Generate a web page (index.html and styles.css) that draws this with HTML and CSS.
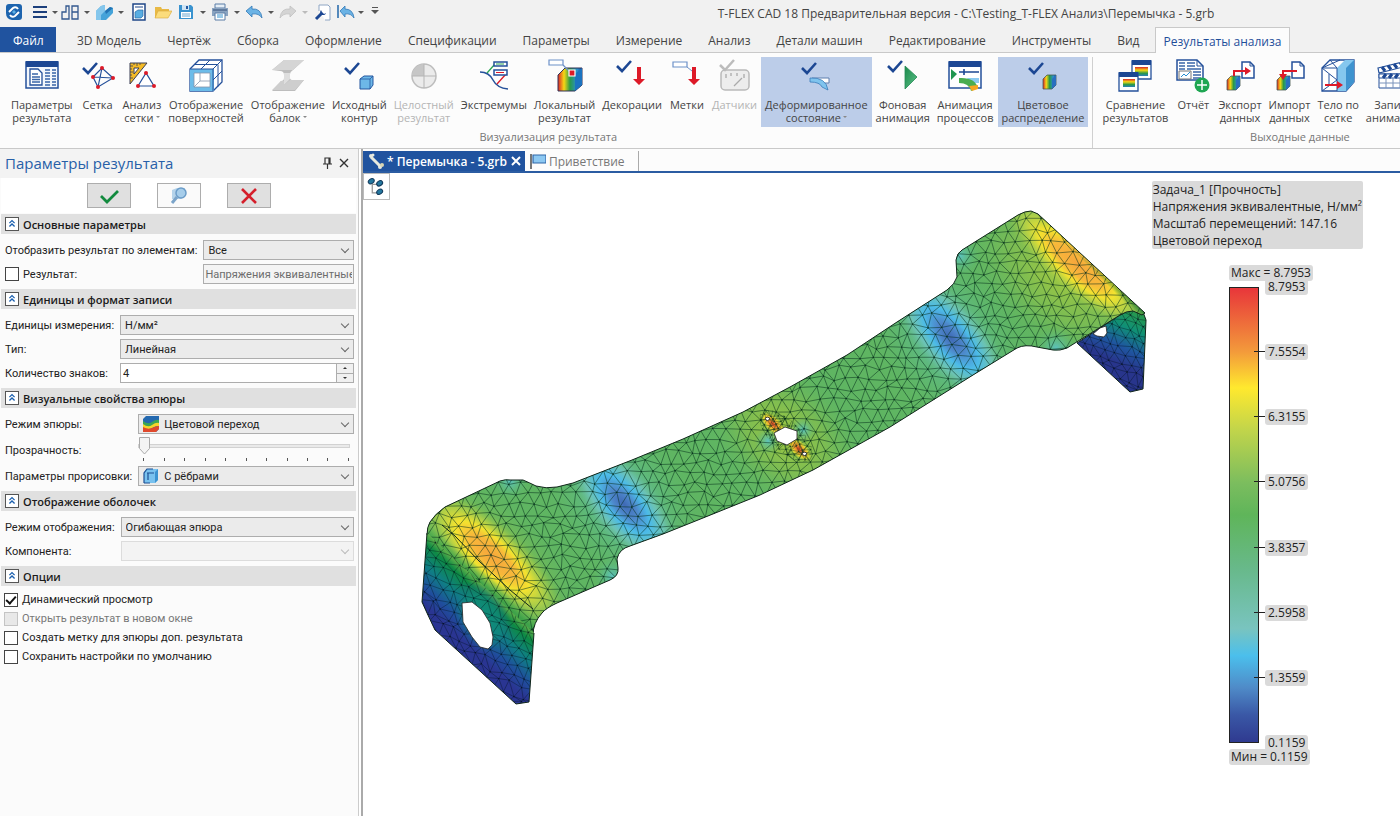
FILE: index.html
```
<!DOCTYPE html>
<html lang="ru">
<head>
    <meta charset="UTF-8">
    <meta name="viewport" content="width=device-width, initial-scale=1.0">
    <title>T-FLEX CAD 18 - Перемычка - 5.grb</title>
    <link rel="stylesheet" href="styles.css">
</head>
<body>
    <svg class="defs" aria-hidden="true">
        <defs>
            <linearGradient id="rainbow" x1="0" x2="1" y1="0" y2="0">
                <stop offset="0" stop-color="#d8232a"/><stop offset=".25" stop-color="#f7d813"/>
                <stop offset=".5" stop-color="#2a9a48"/><stop offset=".8" stop-color="#2a8fd0"/><stop offset="1" stop-color="#1c4fa0"/>
            </linearGradient>
            <linearGradient id="rainbowDown" x1="0" x2="0" y1="0" y2="1">
                <stop offset="0" stop-color="#d8232a"/><stop offset=".35" stop-color="#f7d813"/>
                <stop offset=".7" stop-color="#2a9a48"/><stop offset="1" stop-color="#2a7fc0"/>
            </linearGradient>
            <linearGradient id="play" x1="0" x2="1" y1="0" y2="1">
                <stop offset="0" stop-color="#1b8a4b"/><stop offset="1" stop-color="#5cc088"/>
            </linearGradient>
        </defs>
        <symbol id="tick" viewBox="0 0 16 13"><path d="M1 6l5 5L15 1" fill="none" stroke="#1c4793" stroke-width="2.600"/></symbol>
        <symbol id="cube" viewBox="0 0 15 15"><path d="M1 4l4-3h9v9l-3 4H1z" fill="#6db8e8" stroke="#24579f"/><path d="M1 4h10v10M11 4l3-3" fill="none" stroke="#24579f" stroke-width=".8"/></symbol>
        <symbol id="cubeRainbow" viewBox="0 0 15 16"><path d="M1 5l4-4h9v10l-4 4H1z" fill="url(#rainbow)" stroke="#4a5a50" stroke-width=".8"/><path d="M10 5l4-4v10l-4 4z" fill="#2a6fc0"/></symbol>
        <symbol id="collapse" viewBox="0 0 14 14"><path d="M4 6l3-3 3 3M4 10l3-3 3 3" fill="none" stroke="#1a5fae" stroke-width="1.500"/></symbol>
    </svg>

    <!-- Заголовок окна -->
    <header class="titlebar">
        <div class="quick">
            <button class="q logo" aria-label="T-FLEX"><svg viewBox="0 0 18 18"><path d="M4 1h10q3 0 3 3v10q0 3-3 3H7q-6-1-6-7V4q0-3 3-3z" fill="#1d64ae"/><path d="M4 9l4-4q3-2 5 1M14 9l-4 4q-3 2-5-1" fill="none" stroke="#fff" stroke-width="2"/><path d="M9 7l2 2-2 2-2-2z" fill="#5db1e6"/></svg></button>
            <button class="q menu" aria-label="Меню"><svg viewBox="0 0 18 18"><path d="M2 4h14M2 9h14M2 14h14" stroke="#1c3f7c" stroke-width="2"/></svg></button>
            <button class="drop small" aria-label="Ещё"></button>
            <button class="q" aria-label="Фрагмент"><svg viewBox="0 0 18 18"><path d="M1 16V9h4V3h3v13zM11 3h6v13h-6zM11 9h6" fill="none" stroke="#33588f" stroke-width="1.300"/></svg></button>
            <button class="drop" aria-label="Ещё"></button>
            <button class="q" aria-label="3D фрагмент"><svg viewBox="0 0 18 18"><path d="M1 8l5-5 4-1v6l5-4 3 1v5l-7 7H1z" fill="#45a3d9"/><path d="M1 8l5-5 4-1v6l-4 4v5H1z" fill="#84c6ec"/><path d="M10 8l5-4 3 1-7 6z" fill="#2273b4"/></svg></button>
            <button class="drop" aria-label="Ещё"></button>
            <button class="q wide" aria-label="Новый"><svg viewBox="0 0 18 18"><path d="M3 1h12v16H3z" fill="#fff" stroke="#1f4788" stroke-width="1.500"/><path d="M5 4h8" stroke="#1f4788"/><path d="M5 9l3-2h5v6l-2 2H5z" fill="#58ade2" stroke="#2a6aa8" stroke-width=".7"/></svg></button>
            <button class="q wide" aria-label="Открыть"><svg viewBox="0 0 18 18"><path d="M1 15V4h6l1 2h7v3" fill="#e8b945"/><path d="M1 15l3-7h14l-4 7z" fill="#fbdc7c" stroke="#d9a93a" stroke-width=".6"/></svg></button>
            <button class="q" aria-label="Сохранить"><svg viewBox="0 0 18 18"><path d="M2 2h12l2 2v12H2z" fill="#3a93cf"/><path d="M5 2h7v5H5z" fill="#cfe4f4"/><path d="M9 3h2v3H9z" fill="#24579f"/><path d="M4 9h10v6H4z" fill="#fff"/><path d="M5 11h8M5 13h8" stroke="#6aa6cf"/></svg></button>
            <button class="drop" aria-label="Ещё"></button>
            <button class="q" aria-label="Печать"><svg viewBox="0 0 18 18"><path d="M4 1h10v4H4z" fill="#e5eef6" stroke="#5b7da6"/><path d="M1 5h16v8H1z" fill="#8aa3c0"/><path d="M2 7h14" stroke="#35507b"/><path d="M4 10h10v7H4z" fill="#fff" stroke="#5b7da6"/><path d="M6 12h6M6 14h6" stroke="#3994cf"/></svg></button>
            <button class="drop" aria-label="Ещё"></button>
            <button class="q" aria-label="Отменить"><svg viewBox="0 0 18 18"><path d="M1 8l6-5v3q9-1 10 9-3-5-10-4v3z" fill="#6bb3e5" stroke="#3179b8" stroke-width=".8"/></svg></button>
            <button class="drop" aria-label="Ещё"></button>
            <button class="q" aria-label="Повторить" disabled><svg viewBox="0 0 18 18"><path d="M17 8l-6-5v3Q2 5 1 15q3-5 10-4v3z" fill="#d4d4d4" stroke="#c0c0c0" stroke-width=".8"/></svg></button>
            <button class="drop faded" aria-label="Ещё" disabled></button>
            <button class="q wide" aria-label="Параметры"><svg viewBox="0 0 18 18"><path d="M5 8V2h9l2 2v13h-5" fill="#fff" stroke="#8fa6c4"/><path d="M2 16l6-6" stroke="#1c4793" stroke-width="3"/><path d="M7 7a3 3 0 1 0 5 3l-2 1-2-2z" fill="#1c4793"/></svg></button>
            <button class="q" aria-label="Назад"><svg viewBox="0 0 18 18"><path d="M1 2v13" stroke="#2d6fae" stroke-width="1.600"/><path d="M3 8l5-5v3q8 0 9 9-3-5-9-4v3z" fill="#6bb3e5" stroke="#3179b8" stroke-width=".8"/></svg></button>
            <button class="drop small" aria-label="Ещё"></button>
            <button class="drop line" aria-label="Настройка панели"></button>
        </div>
        <h1>T-FLEX CAD 18 Предварительная версия - C:\Testing_T-FLEX Анализ\Перемычка - 5.grb</h1>
    </header>

    <nav class="tabs" role="tablist">
        <button class="file" role="tab">Файл</button>
        <button role="tab">3D Модель</button>
        <button role="tab">Чертёж</button>
        <button role="tab">Сборка</button>
        <button role="tab">Оформление</button>
        <button role="tab">Спецификации</button>
        <button role="tab">Параметры</button>
        <button role="tab">Измерение</button>
        <button role="tab">Анализ</button>
        <button role="tab">Детали машин</button>
        <button role="tab">Редактирование</button>
        <button role="tab">Инструменты</button>
        <button role="tab">Вид</button>
        <button class="active" role="tab" aria-selected="true">Результаты анализа</button>
    </nav>

    <!-- Лента -->
    <section class="ribbon">
        <div class="group">
            <div class="tools">
                <button class="tool"><svg viewBox="0 0 36 34"><path d="M2 3h32v26H2z" fill="#f3f7fc" stroke="#24509a" stroke-width="1.500"/><path d="M2 2h32v6H2z" fill="#1c4793"/><path d="M6 10h8l4 4v12H6z" fill="#fff" stroke="#24509a" stroke-width="1.300"/><path d="M8 15h6M8 18h8M8 20.500h8M8 23h8M21 11h5M28 11h4M21 14h5M28 14h4M21 17h5M28 17h4M21 20h5M28 20h4M21 23h5M28 23h4M21 26h5M28 26h4" stroke="#3a66a8" stroke-width="1.300"/></svg><span>Параметры<br>результата</span></button>
                <button class="tool"><svg viewBox="0 0 36 34"><use href="#tick" x="2" y="3" width="16" height="13"/><path d="M13 18L22 9l11 10-15 9zM22 9l-4 19M13 18l20 1" fill="none" stroke="#24509a" stroke-width="1.200"/><g fill="#dd1a28"><circle cx="22" cy="9" r="2"/><circle cx="13" cy="18" r="2"/><circle cx="33" cy="19" r="2"/><circle cx="18" cy="28" r="2"/></g></svg><span>Сетка</span></button>
                <button class="tool"><svg viewBox="0 0 36 34"><path d="M6 4h17L6 25z" fill="#f4ba25" stroke="#3b3f55"/><path d="M10 9h5l-5 6z" fill="#fff" stroke="#3b3f55"/><path d="M6 7h3M6 10h2M6 13h3M6 16h2M6 19h3M10 4v2M13 4v3M16 4v2" stroke="#3b3f55" stroke-width=".8"/><path d="M14 27L22 14l8 13z" fill="#fff" stroke="#24509a" stroke-width="1.200"/><g fill="#dd1a28"><circle cx="22" cy="14" r="2"/><circle cx="14" cy="27" r="2"/><circle cx="30" cy="27" r="2"/></g></svg><span>Анализ<br>сетки<i class="caret"></i></span></button>
                <button class="tool"><svg viewBox="0 0 36 34"><path d="M2 10l9-9h23v22l-9 9H2z" fill="#fff" stroke="#24509a" stroke-width="1.300"/><path d="M4 12h20v18H4z" fill="#fff" stroke="#6cbce9" stroke-width="4"/><path d="M2 10h23v22M25 10l9-9M13 10l9-9M7 5.500h23v22M25 21l9-9" fill="none" stroke="#24509a"/><path d="M6 14h16v14H6zM12 14v8h10M6 28l6-6" fill="none" stroke="#8794ab" stroke-width=".8"/></svg><span>Отображение<br>поверхностей</span></button>
                <button class="tool"><svg viewBox="0 0 36 34"><path d="M2 11L14 1h20L23 11q-3 2-3 4v4q0 2 3 2h11l-9 11H2l9-10q3 0 3-3v-3q0-4-4-4z" fill="#bdbdbd"/><path d="M2 11L14 1h20L23 11z" fill="#d5d5d5"/><path d="M14 14h6v6l-6 6z" fill="#dedede"/><path d="M2 31l9-9h3v4l6-5h14l-9 10z" fill="#cecece"/></svg><span>Отображение<br>балок<i class="caret"></i></span></button>
                <button class="tool"><svg viewBox="0 0 36 34"><use href="#tick" x="3" y="3" width="16" height="13"/><use href="#cube" x="18" y="16" width="15" height="15"/></svg><span>Исходный<br>контур</span></button>
                <button class="tool" disabled><svg viewBox="0 0 36 34"><circle cx="18" cy="17" r="12" fill="#ebebeb" stroke="#bdbdbd" stroke-width="1.500"/><path d="M18 17V5A12 12 0 0 0 6 17z" fill="#c6c6c6"/><path d="M18 5v24M6 17h24" stroke="#b5b5b5"/></svg><span>Целостный<br>результат</span></button>
                <button class="tool"><svg viewBox="0 0 36 34"><path d="M4 13q9 0 13 8t15 9" fill="none" stroke="#24509a" stroke-width="1.500"/><path d="M11 14l8-9" fill="none" stroke="#2aa455" stroke-width="1.300"/><path d="M21 25l9-10" stroke="#dd1a28" stroke-width="1.300"/><path d="M18 3h13v4H18zM18 11h13v5H18z" fill="#fff" stroke="#24509a" stroke-width="1.500"/><path d="M20 5h8" stroke="#2aa455"/><path d="M20 13.500h8" stroke="#dd1a28"/></svg><span>Экстремумы</span></button>
                <button class="tool"><svg viewBox="0 0 36 34"><path d="M11 16l7-7h17v17l-7 6H11z" fill="url(#rainbow)" stroke="#335"/><path d="M28 15l7-6v17l-7 6z" fill="#1b73c0"/><path d="M2 1h14v5H2z" fill="#fff" stroke="#6d91c8" stroke-width="1.200"/><path d="M16 6l7 7" stroke="#6d91c8" stroke-width="1.300"/><path d="M22 11h6v6h-6z" fill="#dd1a28" stroke="#fff" stroke-width="1.200"/></svg><span>Локальный<br>результат</span></button>
                <button class="tool"><svg viewBox="0 0 36 34"><use href="#tick" x="2" y="1" width="16" height="13"/><path d="M23 8h4v12h4l-6 6-6-6h4z" fill="#dd1a28"/></svg><span>Декорации</span></button>
                <button class="tool"><svg viewBox="0 0 36 34"><path d="M4 3h14v5H4z" fill="#fff" stroke="#6d91c8" stroke-width="1.200"/><path d="M18 8l5 4" stroke="#6d91c8"/><path d="M23 8h4v12h4l-6 6-6-6h4z" fill="#dd1a28"/></svg><span>Метки</span></button>
                <button class="tool" disabled><svg viewBox="0 0 36 34"><rect x="4" y="11" width="28" height="20" rx="4" fill="#ededed" stroke="#b9b9b9" stroke-width="1.500"/><path d="M9 15v4M14 14v3M20 14v3M27 15v4M17 27l8-8" stroke="#aaa" stroke-width="1.300"/><path d="M3 6l5 5L17 1" fill="none" stroke="#bcbcbc" stroke-width="2.500"/></svg><span>Датчики</span></button>
                <button class="tool on"><svg viewBox="0 0 36 34"><use href="#tick" x="3" y="3" width="16" height="13"/><path d="M14 19h17v5H20z" fill="#fff" stroke="#5f7fae"/><path d="M12 19q16-1 18 12l-6-3q-2-5-12-5z" fill="#80c4ee" stroke="#3a7cba" stroke-width=".8"/></svg><span>Деформированное<br>состояние<i class="caret"></i></span></button>
                <button class="tool"><svg viewBox="0 0 36 34"><use href="#tick" x="2" y="1" width="16" height="13"/><path d="M20 7l12 11-12 12z" fill="url(#play)" stroke="#258a55" stroke-width=".8"/></svg><span>Фоновая<br>анимация</span></button>
                <button class="tool"><svg viewBox="0 0 36 34"><path d="M2 3h32v26H2z" fill="#fff" stroke="#24509a" stroke-width="1.500"/><path d="M2 2h32v6H2z" fill="#1c4793"/><path d="M4 10l6 5-6 6z" fill="#209650"/><path d="M12 13h20M17 10v6" stroke="#1c4793" stroke-width="1.600"/><path d="M20 19h12v5h-8z" fill="#8ccaf0"/><path d="M12 19q16-1 19 10l-7 3q-2-8-12-8z" fill="#4aad50"/><path d="M22 27l9-1v4l-6 2z" fill="#f5a623"/></svg><span>Анимация<br>процессов</span></button>
                <button class="tool on"><svg viewBox="0 0 36 34"><use href="#tick" x="3" y="3" width="16" height="13"/><use href="#cubeRainbow" x="17" y="15" width="15" height="16"/></svg><span>Цветовое<br>распределение</span></button>
            </div>
            <div class="caption">Визуализация результата</div>
        </div>
        <div class="group output">
            <div class="tools">
                <button class="tool"><svg viewBox="0 0 36 34"><path d="M15 2h19v18H15z" fill="#fff" stroke="#24509a" stroke-width="1.300"/><path d="M15 1h19v5H15z" fill="#1c4793"/><path d="M18 8h13v9H18z" fill="url(#rainbowDown)"/><path d="M2 14h19v18H2z" fill="#fff" stroke="#24509a" stroke-width="1.300"/><path d="M2 13h19v5H2z" fill="#1c4793"/><path d="M6 20h12v8H6z" fill="url(#rainbowDown)"/></svg><span>Сравнение<br>результатов</span></button>
                <button class="tool"><svg viewBox="0 0 36 34"><path d="M2 1h20l6 6v14H2z" fill="#fff" stroke="#24509a" stroke-width="1.500"/><path d="M22 1v6h6" fill="none" stroke="#24509a"/><path d="M4 4h6M12 4h8M4 7h6M12 7h8M4 10h6M12 10h14M18 13h8M18 16h8M18 19h8" stroke="#3a66a8" stroke-width="1.500"/><path d="M4 12h12v8H4z" fill="#fff" stroke="#777"/><path d="M6 18l3-3 2 2 4-4" fill="none" stroke="#2a8fd0"/><circle cx="27" cy="26" r="7.500" fill="#1fa652"/><path d="M27 21v10M22 26h10" stroke="#fff" stroke-width="1.500"/></svg><span>Отчёт</span></button>
                <button class="tool"><svg viewBox="0 0 36 34"><path d="M20 3h8l4 4v12H20z" fill="#fff" stroke="#24509a" stroke-width="1.500"/><path d="M28 3v4h4" fill="none" stroke="#24509a"/><use href="#cubeRainbow" x="4" y="16" width="15" height="16"/><path d="M12 17v-5h13" fill="none" stroke="#dd1a28" stroke-width="2"/><path d="M23 8l6 4-6 4z" fill="#dd1a28"/></svg><span>Экспорт<br>данных</span></button>
                <button class="tool"><svg viewBox="0 0 36 34"><path d="M20 3h8l4 4v12H20z" fill="#fff" stroke="#24509a" stroke-width="1.500"/><path d="M28 3v4h4" fill="none" stroke="#24509a"/><use href="#cubeRainbow" x="4" y="16" width="15" height="16"/><path d="M25 12H11v5" fill="none" stroke="#dd1a28" stroke-width="2"/><path d="M7 15h8l-4 6z" fill="#dd1a28"/></svg><span>Импорт<br>данных</span></button>
                <button class="tool"><svg viewBox="0 0 36 34"><path d="M2 9l8-8h24v22l-8 9H2z" fill="#fff" stroke="#24509a" stroke-width="1.300"/><path d="M17 9l8-8h9v22l-8 9h-9z" fill="#85c7ee"/><path d="M26 9l8-8v22l-8 9z" fill="#3e93cf"/><path d="M2 9h15v23M2 9l15 12L2 32M10 1l7 8M2 9l18-8M9 15v11" fill="none" stroke="#24509a"/><path d="M5 26h13" stroke="#dd1a28" stroke-width="2"/><path d="M17 22l6 4-6 4z" fill="#dd1a28"/></svg><span>Тело по<br>сетке</span></button>
                <button class="tool"><svg viewBox="0 0 36 34"><path d="M3 9L32 2v5L4 14z" fill="#fff" stroke="#24509a" stroke-width="1.200"/><path d="M7 8l3 4M13 6.500l3 4M19 5l3 4M25 3.500l3 4" stroke="#1c4793" stroke-width="3"/><path d="M4 15h29v14H4z" fill="#fff" stroke="#24509a"/><path d="M4 15h29v4H4z" fill="#fff" stroke="#24509a"/><path d="M8 19l3-4M14 19l3-4M20 19l3-4M26 19l3-4" stroke="#1c4793" stroke-width="3"/><path d="M4 24h29M11 19v10M18 19v10M25 19v10" stroke="#7a93bb"/></svg><span>Запись<br>анимации</span></button>
            </div>
            <div class="caption">Выходные данные</div>
        </div>
    </section>

    <main class="workspace">
        <!-- Панель параметров -->
        <aside class="panel">
            <div class="panel-title">
                <h2>Параметры результата</h2>
                <button aria-label="Закрепить"><svg viewBox="0 0 12 12"><path d="M4 1h5v6H4zM2 7h9M6.500 7v5M8 1v6" fill="none" stroke="#333" stroke-width="1.200"/></svg></button>
                <button aria-label="Закрыть"><svg viewBox="0 0 12 12"><path d="M2 2l8 8M10 2l-8 8" stroke="#333" stroke-width="1.400"/></svg></button>
            </div>
            <div class="actions">
                <button aria-label="Принять"><svg viewBox="0 0 22 18"><path d="M3 9l6 6L20 4" fill="none" stroke="#128a3e" stroke-width="2.800"/></svg></button>
                <button class="preview" aria-label="Просмотр"><svg viewBox="0 0 22 18"><path d="M4 3l5-2h8v8l-4 3H4z" fill="#b5d3ea"/><circle cx="13" cy="6" r="5" fill="#a6cdea" stroke="#6b9cc8" stroke-width="1.500"/><path d="M9 10l-5 6" stroke="#7ba4c9" stroke-width="3"/></svg></button>
                <button aria-label="Отменить"><svg viewBox="0 0 22 18"><path d="M4 2l14 14M18 2L4 16" stroke="#d51f2b" stroke-width="2.600"/></svg></button>
            </div>

            <button class="section"><svg viewBox="0 0 14 14"><use href="#collapse"/></svg>Основные параметры</button>
            <div class="fields">
                <label for="elements">Отобразить результат по элементам:</label>
                <div class="combo"><select id="elements"><option>Все</option></select></div>
                <label class="check"><input type="checkbox">Результат:</label>
                <input class="text" type="text" value="Напряжения эквивалентные" aria-label="Результат" disabled>
            </div>

            <button class="section"><svg viewBox="0 0 14 14"><use href="#collapse"/></svg>Единицы и формат записи</button>
            <div class="fields">
                <label for="units">Единицы измерения:</label>
                <div class="combo"><select id="units"><option>Н/мм²</option></select></div>
                <label for="type">Тип:</label>
                <div class="combo"><select id="type"><option>Линейная</option></select></div>
                <label for="digits">Количество знаков:</label>
                <div class="spinner">
                    <input class="text" id="digits" type="text" value="4">
                    <div class="steps"><button class="up" aria-label="Больше"></button><button class="down" aria-label="Меньше"></button></div>
                </div>
            </div>

            <button class="section"><svg viewBox="0 0 14 14"><use href="#collapse"/></svg>Визуальные свойства эпюры</button>
            <div class="fields">
                <label for="mode">Режим эпюры:</label>
                <div class="combo pic"><select id="mode"><option>Цветовой переход</option></select><svg viewBox="0 0 16 16"><path d="M0 3l3-3h13v13l-3 3H0z" fill="#2469b0"/><path d="M0 5q5 4 9 1t7-2v4q-4-1-7 2t-9 0z" fill="#3aa655"/><path d="M0 8q5 4 9 1t7-2v3q-4 0-7 2t-9 0z" fill="#f6d52a"/><path d="M0 11q5 3 9 1t7-2v3l-3 3H0z" fill="#e0492c"/></svg></div>
                <label for="opacity">Прозрачность:</label>
                <div class="slider">
                    <input id="opacity" type="range" min="0" max="10" value="0">
                    <div class="ticks"><i></i><i></i><i></i><i></i><i></i><i></i><i></i><i></i><i></i><i></i><i></i></div>
                </div>
                <label for="edges">Параметры прорисовки:</label>
                <div class="combo pic"><select id="edges"><option>С рёбрами</option></select><svg viewBox="0 0 16 16"><path d="M1 4l3-3h11v11l-3 3H1z" fill="#79c2ef"/><path d="M12 4l3-3v11l-3 3z" fill="#3c94d2"/><path d="M1 15V5l3-4h6M1 15h6M5 5v7M4 5h7" fill="none" stroke="#1d4f93" stroke-width="1.200"/></svg></div>
            </div>

            <button class="section"><svg viewBox="0 0 14 14"><use href="#collapse"/></svg>Отображение оболочек</button>
            <div class="fields">
                <label for="shell">Режим отображения:</label>
                <div class="combo"><select id="shell"><option>Огибающая эпюра</option></select></div>
                <label for="component">Компонента:</label>
                <div class="combo"><select id="component" disabled><option></option></select></div>
            </div>

            <button class="section"><svg viewBox="0 0 14 14"><use href="#collapse"/></svg>Опции</button>
            <div class="options">
                <label class="check"><input type="checkbox" checked>Динамический просмотр</label>
                <label class="check off"><input type="checkbox" disabled>Открыть результат в новом окне</label>
                <label class="check"><input type="checkbox">Создать метку для эпюры доп. результата</label>
                <label class="check"><input type="checkbox">Сохранить настройки по умолчанию</label>
            </div>
        </aside>

        <section class="document">
            <div class="doc-tabs">
                <div class="doc-tab current">
                    <svg viewBox="0 0 16 16"><path d="M3 4l9 9" stroke="#e8eadf" stroke-width="3"/><circle cx="3" cy="3" r="2" fill="#e8eadf"/><circle cx="5" cy="2" r="1.500" fill="#e8eadf"/><circle cx="12" cy="14" r="2" fill="#e8eadf"/><circle cx="14" cy="12" r="2" fill="#d8d6b4"/></svg>
                    <a href="#">* Перемычка - 5.grb</a>
                    <button aria-label="Закрыть вкладку"><svg viewBox="0 0 12 12"><path d="M2 2l8 8M10 2l-8 8" stroke="#fff" stroke-width="2"/></svg></button>
                </div>
                <div class="doc-tab">
                    <svg viewBox="0 0 16 16"><path d="M1 1v15" stroke="#777" stroke-width="2"/><path d="M3 2h13v8H3z" fill="#8cc8f2" stroke="#2f66a8" stroke-width="1.200"/></svg>
                    <a href="#">Приветствие</a>
                </div>
            </div>
            <div class="viewport">
                <svg class="model" viewBox="363 173 1037 643" preserveAspectRatio="xMinYMin meet" role="img" aria-label="Эпюра напряжений">
                    <defs>
                        <clipPath id="plateClip"><path id="plate" d="M427 535Q427 527 430 522Q435 514 445 507L500 481Q506 479 510 480L523 480Q530 483 536 486Q546 489 557 487L573 483L632 460L683 439L743 412L790 387L847 355L897 322L947 290Q955 284 957 277L956 260Q957 253 962 250L1018 215Q1025 211 1031 211L1038 214L1145 313L1142 315L1133 311Q1126 311 1120 315L1067 348Q1060 351 1053 350L1037 347Q1025 344 1017 348L973 375L890 427L813 470L760 495L698 520L663 534L630 546Q619 549 617 559L618 568Q619 576 610 580L557 603Q546 608 542 613Q533 623 533 635Z"/></clipPath>
                        <clipPath id="leftClip"><path id="left" d="M427 533L534 633L529 702L516 704L435 630L427 613L422 602Z"/></clipPath>
                        <clipPath id="rightClip"><path id="right" d="M1077 343L1120 315Q1126 311 1133 310L1143 312L1146 320L1143 389L1130 392Z"/></clipPath>
                        <clipPath id="fineClip"><ellipse cx="786" cy="436" rx="34" ry="15" transform="rotate(44 786 436)"/></clipPath>
                        <radialGradient id="hot"><stop offset="0" stop-color="#f6a63c"/><stop offset=".3" stop-color="#f8b83a"/><stop offset=".5" stop-color="#f3e32f"/><stop offset=".72" stop-color="#b8d346" stop-opacity=".75"/><stop offset="1" stop-color="#7dbf50" stop-opacity="0"/></radialGradient>
                        <radialGradient id="cold"><stop offset="0" stop-color="#3f69b5"/><stop offset=".22" stop-color="#4d86ca"/><stop offset=".45" stop-color="#4cbbe8"/><stop offset=".7" stop-color="#70c5bd" stop-opacity=".8"/><stop offset="1" stop-color="#66b884" stop-opacity="0"/></radialGradient>
                        <radialGradient id="lime"><stop offset="0" stop-color="#a3c93f"/><stop offset=".5" stop-color="#86bf4d" stop-opacity=".7"/><stop offset="1" stop-color="#5fb562" stop-opacity="0"/></radialGradient>
                        <radialGradient id="aqua"><stop offset="0" stop-color="#5cc2bd"/><stop offset="1" stop-color="#5fb562" stop-opacity="0"/></radialGradient>
                        <radialGradient id="peak"><stop offset="0" stop-color="#e0402a"/><stop offset=".4" stop-color="#f3a72f"/><stop offset=".7" stop-color="#f2e12f" stop-opacity=".8"/><stop offset="1" stop-color="#86bf4d" stop-opacity="0"/></radialGradient>
                        <radialGradient id="teal"><stop offset="0" stop-color="#0f8f78"/><stop offset=".6" stop-color="#10887c" stop-opacity=".7"/><stop offset="1" stop-color="#1c5f94" stop-opacity="0"/></radialGradient>
                        <linearGradient id="leftFill" gradientUnits="userSpaceOnUse" x1="483" y1="585" x2="446" y2="625"><stop offset="0" stop-color="#5fb04a"/><stop offset=".15" stop-color="#0e8a44"/><stop offset=".45" stop-color="#0f7f84"/><stop offset=".75" stop-color="#1f4f9d"/><stop offset="1" stop-color="#2a3592"/></linearGradient>
                        <linearGradient id="rightFill" gradientUnits="userSpaceOnUse" x1="1140" y1="312" x2="1116" y2="362"><stop offset="0" stop-color="#2a9a48"/><stop offset=".35" stop-color="#109076"/><stop offset=".7" stop-color="#1f56a0"/><stop offset="1" stop-color="#28358c"/></linearGradient>
                        <linearGradient id="bend" gradientUnits="userSpaceOnUse" x1="1084" y1="262" x2="1091" y2="255"><stop offset="0" stop-color="#1d7a2c" stop-opacity="0"/><stop offset="1" stop-color="#14682c"/></linearGradient>
                        <linearGradient id="bendLeft" gradientUnits="userSpaceOnUse" x1="487" y1="574" x2="480" y2="582"><stop offset="0" stop-color="#4fae4a" stop-opacity="0"/><stop offset="1" stop-color="#3fa24a"/></linearGradient>
                    </defs>
                    <use href="#right" fill="url(#rightFill)"/>
                    <path id="rightMesh" class="mesh dark" clip-path="url(#rightClip)"/>
                    <use href="#right" class="outline"/>
                    <path d="M1093 334L1100 328L1106 326L1107 333L1104 337L1097 336Z" class="hole"/>
                    <g clip-path="url(#plateClip)">
                        <path d="M363 173h1037v643H363z" fill="#5fb562"/>
                        <ellipse cx="785" cy="436" rx="100" ry="64" transform="rotate(44 785 436)" fill="url(#lime)"/>
                        <ellipse cx="1060" cy="275" rx="118" ry="72" transform="rotate(42 1060 275)" fill="url(#lime)"/>
                        <ellipse cx="488" cy="560" rx="120" ry="60" transform="rotate(43 488 560)" fill="url(#lime)"/>
                        <ellipse cx="622" cy="502" rx="110" ry="72" transform="rotate(55 622 502)" fill="url(#aqua)"/>
                        <ellipse cx="948" cy="338" rx="110" ry="72" transform="rotate(55 948 338)" fill="url(#aqua)"/>
                        <ellipse cx="624" cy="504" rx="80" ry="34" transform="rotate(50 624 504)" fill="url(#cold)"/>
                        <ellipse cx="951" cy="338" rx="84" ry="35" transform="rotate(50 951 338)" fill="url(#cold)"/>
                        <ellipse cx="492" cy="556" rx="96" ry="32" transform="rotate(43 492 556)" fill="url(#hot)"/>
                        <ellipse cx="1077" cy="264" rx="98" ry="30" transform="rotate(42 1077 264)" fill="url(#hot)"/>
                        <circle cx="510" cy="481" r="20" fill="url(#aqua)"/>
                        <circle cx="612" cy="576" r="20" fill="url(#aqua)"/>
                        <circle cx="960" cy="256" r="22" fill="url(#aqua)"/>
                        <circle cx="1056" cy="348" r="22" fill="url(#aqua)"/>
                        <circle cx="803" cy="430" r="14" fill="url(#aqua)"/>
                        <circle cx="768" cy="441" r="14" fill="url(#aqua)"/>
                        <ellipse cx="773" cy="424" rx="17" ry="8" transform="rotate(44 773 424)" fill="url(#peak)"/>
                        <ellipse cx="799" cy="449" rx="17" ry="8" transform="rotate(44 799 449)" fill="url(#peak)"/>
                        <path d="M1031 211L1145 313L1138 319L1024 217Z" fill="url(#bend)"/>
                        <path d="M427 533L534 635L545 624L437 522Z" fill="url(#bendLeft)"/>
                        <path id="plateMesh" class="mesh"/>
                        <path id="fineMesh" class="mesh fine" clip-path="url(#fineClip)"/>
                        <path d="M442 525L455 536L479 561L510 590L533 609" class="crease"/>
                    </g>
                    <use href="#plate" class="outline"/>
                    <use href="#left" fill="url(#leftFill)"/>
                    <g clip-path="url(#leftClip)">
                        <ellipse cx="482" cy="618" rx="40" ry="26" transform="rotate(58 482 618)" fill="url(#teal)"/>
                        <path id="leftMesh" class="mesh dark"/>
                    </g>
                    <path d="M534 633L529 702L516 704L435 630L427 613L422 602L427 533" class="outline"/>
                    <path d="M462 603L472 602L482 610L490 623L493 637L492 645L488 649L480 647L472 637L463 622Z" class="hole"/>
                    <path d="M774 433L785 427L797 431L797 439L787 445L777 441Z" class="hole"/>
                    <path d="M765 418l3-1 2 2-3 2zM802 453l3-1 2 2-3 2z" class="hole"/>
                </svg>

                <button class="tree" aria-label="Дерево модели"><svg viewBox="0 0 18 18"><path d="M5 6v9h5M5 7h5" fill="none" stroke="#999" stroke-width="1.200"/><g fill="#24789f" stroke="#123a5c"><ellipse cx="4" cy="4" rx="3" ry="2.200" transform="rotate(-35 4 4)"/><ellipse cx="12" cy="6" rx="3" ry="2.200" transform="rotate(-35 12 6)"/><ellipse cx="12" cy="14" rx="3" ry="2.200" transform="rotate(-35 12 14)"/></g></svg></button>

                <div class="info">Задача_1 [Прочность]<br>Напряжения эквивалентные, Н/мм²<br>Масштаб перемещений: 147.16<br>Цветовой переход</div>

                <div class="legend">
                    <div class="chip">Макс = 8.7953</div>
                    <div class="scale">
                        <div class="bar"></div>
                        <ol>
                            <li>8.7953</li>
                            <li>7.5554</li>
                            <li>6.3155</li>
                            <li>5.0756</li>
                            <li>3.8357</li>
                            <li>2.5958</li>
                            <li>1.3559</li>
                            <li>0.1159</li>
                        </ol>
                    </div>
                    <div class="chip">Мин = 0.1159</div>
                </div>
            </div>
        </section>
    </main>

    <script src="mesh.js"></script>
</body>
</html>
```
FILE: styles.css
```
* {
    box-sizing: border-box;
}
body {
    margin: 0;
    height: 100vh;
    display: flex;
    flex-direction: column;
    overflow: hidden;
    background: #fff;
    color: #444;
    font-family: "Open Sans", "Noto Sans", sans-serif;
    font-size: 11px;
}
button, input, select {
    font: inherit;
    color: inherit;
    margin: 0;
}
button {
    padding: 0;
    border: 0;
    background: none;
}
svg {
    display: block;
}
h1, h2 {
    margin: 0;
    font-weight: normal;
}
.defs {
    position: absolute;
    width: 0;
    height: 0;
}

/* заголовок */
.titlebar {
    display: flex;
    height: 27px;
    background: #f1f1f1;
}
.titlebar h1 {
    flex: 1;
    padding-left: 52px;
    font-size: 12px;
    line-height: 28px;
    text-align: center;
    white-space: nowrap;
}
.quick {
    display: flex;
    align-items: center;
    flex: 0 0 480px;
    height: 24px;
    padding: 0 3px;
}
.q {
    flex: 0 0 22px;
    display: flex;
    justify-content: center;
}
.q svg {
    width: 18px;
    height: 18px;
}
.q.menu {
    margin-left: 4px;
}
.q.wide {
    flex-basis: 24px;
}
.drop {
    flex: 0 0 12px;
    display: flex;
    justify-content: center;
}
.drop::before {
    content: "";
    border: 3px solid transparent;
    border-top-color: #555;
    border-bottom: 0;
}
.drop.small {
    flex-basis: 8px;
}
.drop.faded::before {
    border-top-color: #bbb;
}
.drop.line {
    flex-basis: 20px;
}
.drop.line::before {
    border-width: 4px 4px 0;
    box-shadow: 0 -3px 0 -1px #f1f1f1, 0 -4px 0 -1px #555;
}

/* вкладки ленты */
.tabs {
    display: flex;
    height: 26px;
    background: #f1f1f1;
    border-bottom: 1px solid #c9c9c9;
}
.tabs button {
    padding: 2px 13px 0;
    font-size: 12px;
    white-space: nowrap;
}
.tabs .file {
    width: 56px;
    margin-right: 8px;
    background: #20539f;
    color: #fff;
}
.tabs .active {
    margin: 0 0 -1px 2px;
    padding: 1px 8px 0;
    border: 1px solid #c9c9c9;
    border-bottom: 0;
    background: #fcfcfc;
    color: #1f4e9a;
}

/* лента */
.ribbon {
    display: flex;
    height: 96px;
    padding: 4px 0 0 8px;
    background: #fcfcfc;
    border-bottom: 1px solid #c9c9c9;
    overflow: hidden;
}
.group {
    flex: none;
}
.tools {
    display: flex;
    gap: 1px;
    height: 70px;
}
.tool {
    display: flex;
    flex-direction: column;
    align-items: center;
    gap: 5px;
    padding: 2px 3px 0;
    line-height: 13px;
    white-space: nowrap;
}
.tool svg {
    width: 36px;
    height: 34px;
}
.tool:disabled {
    color: #b4b4b4;
}
.tool.on {
    padding: 2px 4px 0;
    background: #bccde9;
}
.caret {
    display: inline-block;
    margin: 0 0 4px 2px;
    border: 2px solid transparent;
    border-top-color: #888;
    border-bottom: 0;
}
.caption {
    line-height: 20px;
    text-align: center;
    color: #777;
}
.output {
    width: 408px;
    margin-left: 4px;
    padding-left: 6px;
    border-left: 1px solid #d0d0d0;
}

.workspace {
    flex: 1;
    display: flex;
    min-height: 0;
}

/* панель параметров */
.panel {
    flex: 0 0 359px;
    padding: 0 2px 0 1px;
    background: #fbfbfb;
    border-right: 1px solid #ccc;
    color: #222;
}
.panel-title {
    display: flex;
    align-items: center;
    gap: 5px;
    height: 29px;
    margin: 0 -2px 0 -1px;
    padding: 0 8px 2px 5px;
    background: #f3f3f3;
}
.panel-title h2 {
    flex: 1;
    font-size: 15px;
    color: #2860a8;
}
.panel-title svg {
    width: 12px;
    height: 12px;
}
.actions {
    display: flex;
    justify-content: center;
    align-items: center;
    gap: 26px;
    height: 35px;
    margin-bottom: 1px;
    background: #fff;
}
.actions button {
    display: grid;
    place-items: center;
    width: 44px;
    height: 25px;
    background: #e0e0e0;
    border: 1px solid #adadad;
}
.actions .preview {
    background: #fafafa;
}
.actions svg {
    width: 22px;
    height: 18px;
}
.section {
    display: flex;
    align-items: center;
    gap: 4px;
    width: 100%;
    height: 20px;
    padding-left: 4px;
    background: #e0e0e0;
    font-weight: 600;
    color: #1a1a1a;
}
.section svg {
    width: 14px;
    height: 14px;
    border: 1px solid #555;
    background: #fff;
}
.fields {
    display: grid;
    grid-template-columns: auto 1fr;
    grid-auto-rows: minmax(24px, auto);
    align-items: center;
    column-gap: 6px;
    padding: 4px 2px 3px 4px;
    white-space: nowrap;
}
.fields, .options {
    font-family: Roboto, "Open Sans", sans-serif;
}
.combo {
    position: relative;
    min-width: 0;
}
.combo select {
    display: block;
    width: 100%;
    height: 20px;
    padding: 0 20px 0 4px;
    border: 1px solid #adadad;
    border-radius: 0;
    background: #ebebeb;
    appearance: none;
}
.combo select:disabled {
    background: #f1f1f1;
    border-color: #d0d0d0;
}
.combo::after {
    content: "";
    position: absolute;
    right: 6px;
    top: 6px;
    width: 5px;
    height: 5px;
    border: solid #666;
    border-width: 0 1px 1px 0;
    transform: rotate(45deg);
    pointer-events: none;
}
.combo:has(select:disabled)::after {
    border-color: #bbb;
}
.combo.pic select {
    padding-left: 25px;
}
.combo.pic svg {
    position: absolute;
    left: 5px;
    top: 2px;
    width: 16px;
    height: 16px;
}
.text {
    width: 100%;
    min-width: 0;
    height: 20px;
    padding: 0 2px;
    border: 1px solid #adadad;
    background: #fff;
}
.text:disabled {
    padding: 0 1px;
    background: #f4f4f4;
    color: #6d6d6d;
}
.spinner {
    display: flex;
    min-width: 0;
}
.steps {
    flex: 0 0 17px;
    display: flex;
    flex-direction: column;
}
.steps button {
    flex: 1;
    display: grid;
    place-items: center;
    border: 1px solid #adadad;
    border-left: 0;
    background: #f0f0f0;
}
.steps .down {
    border-top: 0;
}
.steps button::before {
    content: "";
    border: 2px solid transparent;
}
.steps .up::before {
    border-bottom-color: #333;
    border-top: 0;
}
.steps .down::before {
    border-top-color: #333;
    border-bottom: 0;
}
.slider {
    height: 28px;
}
.slider input {
    display: block;
    width: 100%;
    height: 20px;
    padding-right: 4px;
    background: none;
    appearance: none;
}
.slider input::-webkit-slider-runnable-track {
    height: 4px;
    border: 1px solid #d2d2d2;
    background: #eaeaea;
}
.slider input::-webkit-slider-thumb {
    appearance: none;
    width: 11px;
    height: 18px;
    margin-top: -8px;
    background: url("data:image/svg+xml,%3Csvg xmlns='http://www.w3.org/2000/svg' viewBox='0 0 11 18'%3E%3Cpath d='M.5.5h10v11l-5 5.500-5-5.500z' fill='%23f4f4f4' stroke='%23aaa'/%3E%3C/svg%3E");
}
.ticks {
    display: flex;
    justify-content: space-between;
    padding: 2px 5px 0;
}
.ticks i {
    width: 1px;
    height: 3px;
    background: #555;
}
.check {
    display: flex;
    align-items: center;
    gap: 4px;
}
.check input {
    display: grid;
    place-items: center;
    width: 14px;
    height: 14px;
    border: 1px solid #444;
    background: #fff;
    appearance: none;
}
.check input:checked::before {
    content: "";
    width: 4px;
    height: 8px;
    margin-bottom: 2px;
    border: solid #111;
    border-width: 0 2px 2px 0;
    transform: rotate(42deg);
}
.check.off {
    color: #777;
}
.check.off input {
    border-color: #c4c4c4;
    background: #e8e8e8;
}
.options {
    padding: 4px 3px;
}
.options .check {
    height: 19px;
}

/* документ */
.document {
    flex: 1;
    display: flex;
    flex-direction: column;
    min-width: 0;
    border-left: 2px solid #aaa;
    margin-left: 2px;
}
.doc-tabs {
    display: flex;
    padding-top: 2px;
    border-bottom: 2px solid #2b5ca2;
    background: #fcfcfc;
}
.doc-tab {
    display: flex;
    align-items: center;
    gap: 3px;
    height: 20px;
    padding: 0 5px;
    font-size: 12px;
    color: #777;
    white-space: nowrap;
}
.doc-tab a {
    color: inherit;
    text-decoration: none;
}
.doc-tab svg {
    width: 16px;
    height: 16px;
}
.doc-tab button svg {
    width: 12px;
    height: 12px;
}
.doc-tab.current {
    padding: 0 3px 0 5px;
    background: #20539f;
    color: #fff;
    font-weight: 600;
}
.doc-tab:last-child {
    padding-right: 13px;
    border-right: 1px solid #aaa;
}
.viewport {
    position: relative;
    flex: 1;
    min-height: 0;
    overflow: hidden;
    background: #fff;
}
.model {
    width: 100%;
    height: 100%;
}
.mesh {
    fill: none;
    stroke: #06301c;
    stroke-opacity: 0.75;
    stroke-width: 0.7;
}
.mesh.fine {
    stroke-width: 0.5;
}
.mesh.dark {
    stroke: #001018;
    stroke-opacity: 0.6;
    stroke-width: 0.6;
}
.crease, .outline {
    fill: none;
    stroke: #10251a;
    stroke-width: 1;
}
.hole {
    fill: #fff;
    stroke: #222;
    stroke-width: 0.8;
}
.tree {
    position: absolute;
    left: 0;
    top: 0;
    padding: 3px;
    border: 1px solid #bbb;
    background: #fff;
}
.tree svg {
    width: 19px;
    height: 19px;
}
.info {
    position: absolute;
    top: 8px;
    right: 37px;
    padding: 0 1px;
    border-radius: 2px;
    background: #dadada;
    color: #222;
    font-size: 12px;
    line-height: 17px;
    white-space: nowrap;
}
.legend {
    position: absolute;
    top: 92px;
    right: 86px;
    width: 85px;
    color: #222;
    font-size: 12px;
}
.chip {
    position: relative;
    width: max-content;
    padding: 0 2px;
    border-radius: 3px;
    background: #dadada;
    line-height: 16px;
}
.scale {
    display: flex;
    margin: -2px 0;
}
.bar {
    width: 30px;
    margin: 8px 0;
    border: 1px solid #222;
    background: linear-gradient(#e8363a, #f39a3b 14%, #ffe92e 22%, #c3d54a 31%, #7bbd5e 43%, #5fb55a 50%, #68b98b 62%, #79c4bf 75%, #4bbfec 81%, #4f8bc8 88%, #3a58a6 94%, #2f3a90);
}
.scale ol {
    display: flex;
    flex-direction: column;
    justify-content: space-between;
    height: 472px;
    margin: 0 0 0 6px;
    padding: 0;
    list-style: none;
}
.scale li {
    position: relative;
    padding: 0 3px;
    border-radius: 3px;
    background: #dadada;
    line-height: 16px;
}
.scale li::before {
    content: "";
    position: absolute;
    left: -11px;
    top: 7px;
    width: 11px;
    height: 1px;
    background: #222;
}
.scale li:first-child::before, .scale li:last-child::before {
    display: none;
}
```
FILE: mesh.js
```
// Треугольная сетка: узлы со случайным смещением, рёбра одной строкой path
function buildMesh(id, x0, y0, x1, y1, step, seed, shear) {
    let s = seed;
    const rnd = () => {
        s = (s * 16807) % 2147483647;
        return s / 2147483647 - 0.5;
    };
    const row = step * 0.84;
    const nodes = [];
    for (let j = 0; y0 + j * row <= y1 + row; j++) {
        nodes[j] = [];
        for (let i = 0; x0 + i * step <= x1 + step; i++) {
            const x = x0 + i * step + (j % 2) * step / 2 + rnd() * step * 0.45;
            const y = y0 + j * row + rnd() * step * 0.45 + (i * step) * shear;
            nodes[j][i] = [x.toFixed(1), y.toFixed(1)];
        }
    }
    let d = '';
    const edge = (a, b) => {
        if (a && b) {
            d += `M${a[0]} ${a[1]}L${b[0]} ${b[1]}`;
        }
    };
    const dot = (a) => {
        d += `M${a[0] - 0.6} ${a[1]}h1.2m-.6-.6v1.2`;
    };
    nodes.forEach((line, j) => {
        const next = nodes[j + 1] || [];
        line.forEach((p, i) => {
            edge(p, line[i + 1]);
            edge(p, next[i]);
            edge(p, j % 2 ? next[i + 1] : next[i - 1]);
            dot(p);
        });
    });
    document.getElementById(id).setAttribute('d', d);
}

buildMesh('plateMesh', 415, 200, 1150, 640, 12.5, 71, 0);
buildMesh('fineMesh', 750, 400, 820, 470, 6, 19, 0);
buildMesh('leftMesh', 415, 480, 540, 710, 11, 37, 0.3);
buildMesh('rightMesh', 1070, 280, 1150, 395, 10, 53, 0.3);
```
